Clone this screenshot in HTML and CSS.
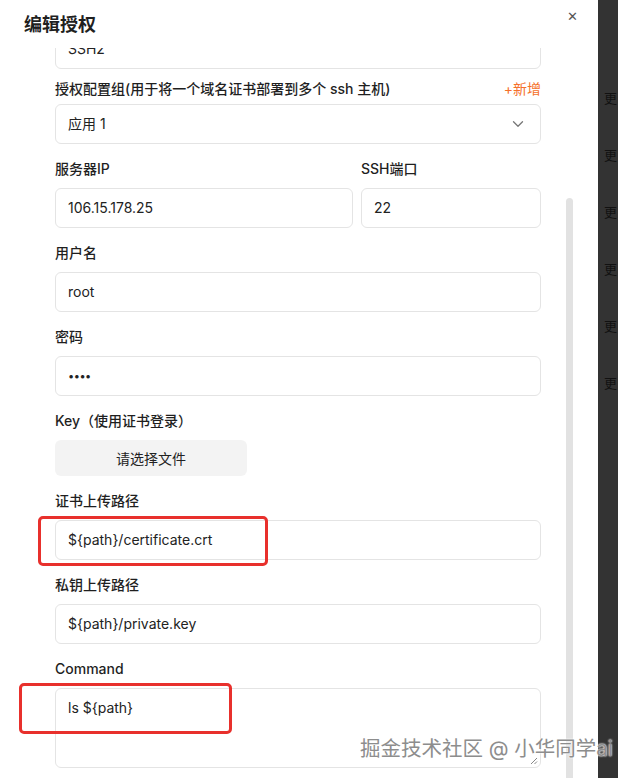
FILE: index.html
```html
<!DOCTYPE html>
<html lang="zh-CN">
<head>
    <meta charset="UTF-8">
    <title>编辑授权</title>
    <link rel="stylesheet" href="styles.css">
</head>
<body>

<div class="page">
    <div class="modal">
        <div class="modal-header">
            <h2 class="modal-title">编辑授权</h2>
            <span class="close">&#x2715;</span>
        </div>

        <div class="modal-body">
            <div class="form">
                <!-- scrolled: first field half hidden under header -->
                <div class="field field-first">
                    <div class="input">SSH2</div>
                </div>

                <div class="field field-group">
                    <div class="label-row">
                        <label class="label">授权配置组(用于将一个域名证书部署到多个 ssh 主机)</label>
                        <span class="add-link">+新增</span>
                    </div>
                    <div class="input select">
                        <span>应用 1</span>
                        <svg class="chevron" width="12" height="8" viewBox="0 0 12 8"><path d="M1.5 1.8 6 6.2l4.5-4.4" fill="none" stroke="#777" stroke-width="1.3" stroke-linecap="round" stroke-linejoin="round"/></svg>
                    </div>
                </div>

                <div class="field-row">
                    <div class="field">
                        <label class="label">服务器IP</label>
                        <div class="input">106.15.178.25</div>
                    </div>
                    <div class="field">
                        <label class="label">SSH端口</label>
                        <div class="input">22</div>
                    </div>
                </div>

                <div class="field">
                    <label class="label">用户名</label>
                    <div class="input">root</div>
                </div>

                <div class="field">
                    <label class="label">密码</label>
                    <div class="input dots">••••</div>
                </div>

                <div class="field">
                    <label class="label">Key（使用证书登录）</label>
                    <button class="file-btn">请选择文件</button>
                </div>

                <div class="field">
                    <label class="label">证书上传路径</label>
                    <div class="input">${path}/certificate.crt</div>
                </div>

                <div class="field">
                    <label class="label">私钥上传路径</label>
                    <div class="input">${path}/private.key</div>
                </div>

                <div class="field">
                    <label class="label">Command</label>
                    <div class="input textarea">
                        ls ${path}
                        <svg class="resize" width="8" height="8" viewBox="0 0 8 8"><path d="M7 1 1 7M7 4.5 4.5 7" stroke="#888" stroke-width="1"/></svg>
                    </div>
                </div>
            </div>

            <div class="scroll-thumb"></div>
        </div>

        <!-- annotations -->
        <div class="mark mark-cert"></div>
        <div class="mark mark-cmd"></div>
        <div class="watermark">掘金技术社区 @ 小华同学ai</div>
    </div>

    <div class="side">
        <span>更</span>
        <span>更</span>
        <span>更</span>
        <span>更</span>
        <span>更</span>
        <span>更</span>
    </div>
</div>

</body>
</html>
```

FILE: styles.css
```css
* {
    box-sizing: border-box;
}

body {
    margin: 0;
    font-family: Inter, "Noto Sans CJK SC", sans-serif;
    color: #1f1f1f;
    background: #fff;
}

.page {
    display: flex;
    width: 618px;
    height: 778px;
    overflow: hidden;
}

.modal {
    position: relative;
    width: 598px;
    height: 778px;
    background: #fff;
    display: flex;
    flex-direction: column;
}

.modal-header {
    height: 48px;
    flex-shrink: 0;
    display: flex;
    justify-content: space-between;
    padding: 0 20px 0 24px;
    background: #fff;
    position: relative;
    z-index: 2;
}

.modal-title {
    margin: 13px 0 0;
    font-size: 18px;
    font-weight: 700;
    line-height: 24px;
}

.close {
    margin-top: 8px;
    font-size: 13px;
    color: #555;
}

.modal-body {
    position: relative;
    flex: 1;
    overflow: hidden;
}

.form {
    width: 486px;
    margin-left: 55px;
}

.field {
    margin-bottom: 15px;
}

.field-first {
    margin-top: -19px;
    margin-bottom: 10px;
}

.field-group .label-row {
    display: flex;
    justify-content: space-between;
    line-height: 20px;
    margin-bottom: 5px;
}

.field-group .label {
    margin-bottom: 0;
}

.add-link {
    font-size: 14px;
    color: #f5702a;
}

.field-row {
    display: grid;
    grid-template-columns: 298px 180px;
    column-gap: 8px;
}

.label {
    display: block;
    font-size: 14px;
    font-weight: 500;
    line-height: 20px;
    margin-bottom: 9px;
    color: #1f1f1f;
}

.input {
    height: 40px;
    border: 1px solid #e4e4e4;
    border-radius: 6px;
    padding: 0 12px;
    font-size: 14px;
    line-height: 38px;
    color: #222;
}

.select {
    display: flex;
    justify-content: space-between;
    align-items: center;
    padding-right: 16px;
}

.dots {
    font-size: 11px;
    letter-spacing: -0.5px;
}

.textarea {
    position: relative;
    height: 80px;
    line-height: 20px;
    padding-top: 9px;
}

.resize {
    position: absolute;
    right: 2px;
    bottom: 2px;
}

.file-btn {
    display: block;
    width: 192px;
    height: 36px;
    border: none;
    border-radius: 6px;
    background: #f3f3f3;
    font-family: inherit;
    font-size: 14px;
    color: #222;
}

.scroll-thumb {
    position: absolute;
    left: 566px;
    top: 150px;
    width: 7px;
    height: 620px;
    background: #e2e2e2;
    border-radius: 4px;
}

.mark {
    position: absolute;
    border: 3px solid #e8302c;
    border-radius: 5px;
}

.mark-cert {
    left: 38px;
    top: 516px;
    width: 230px;
    height: 50px;
}

.mark-cmd {
    left: 19px;
    top: 683px;
    width: 213px;
    height: 51px;
}

.watermark {
    position: absolute;
    left: 360px;
    top: 732px;
    z-index: 3;
    font-size: 20.5px;
    color: #8d8d8d;
    white-space: nowrap;
    text-shadow: 0 0 2px #fff, 0 0 2px #fff;
}

.side {
    width: 20px;
    background: #333;
    display: flex;
    flex-direction: column;
    padding-top: 89px;
    gap: 39px;
}

.side span {
    font-size: 13px;
    line-height: 18px;
    color: #111;
    padding-left: 6px;
}
```
